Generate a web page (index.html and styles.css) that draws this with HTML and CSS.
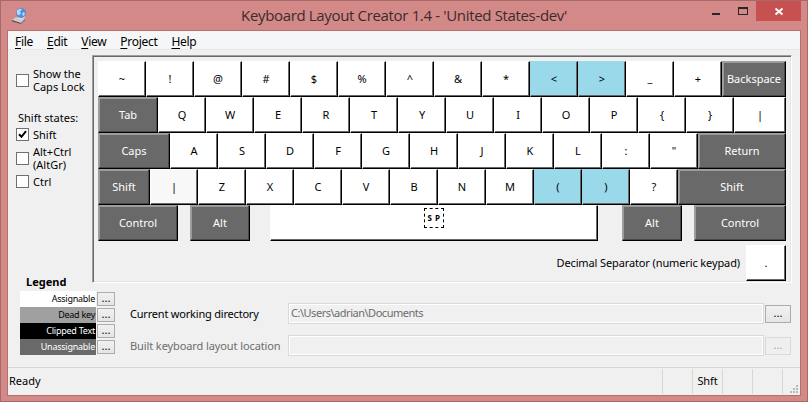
FILE: index.html
```html
<!DOCTYPE html>
<html lang="en">
<head>
<meta charset="utf-8">
<title>Keyboard Layout Creator 1.4</title>
<link rel="stylesheet" href="styles.css">
</head>
<body>
<div class="window">
  <header class="titlebar">
    <svg class="app-icon" viewBox="0 0 18 18" width="18" height="18">
      <path d="M2 13l4-3 9 2-4 4z" fill="#c9cdd2"/>
      <path d="M2 13l9 3v1L2 14.500z" fill="#55565c"/>
      <path d="M11 16l4-4v1.500l-4 3.500z" fill="#77659f"/>
      <circle cx="11" cy="6" r="5" fill="#4d8fdb"/>
      <path d="M7 3.500q3-3 5-1l-2 2 1 2-2 2q-3-1-2-5zM13 5l2 1-1 3-2-1z" fill="#b6d9f3"/>
      <path d="M8 11q4 2 7-1" fill="none" stroke="#dde6ee"/>
    </svg>
    <h1 class="title">Keyboard Layout Creator 1.4 - 'United States-dev'</h1>
    <svg class="win-buttons" viewBox="0 0 100 20" width="100" height="20">
      <path d="M10 12h8v2h-8z" fill="#2b2526"/>
      <path d="M36 6h10v8H36zM37 8v5h8V8z" fill="#2b2526" fill-rule="evenodd"/>
      <path d="M54 0h45v20H54z" fill="#c75050"/>
      <path d="M73.500 7.500l7 6M80.500 7.500l-7 6" stroke="#fff" stroke-width="1.900" fill="none"/>
    </svg>
  </header>

  <div class="client">
    <nav class="menu">
      <span><u>F</u>ile</span><span><u>E</u>dit</span><span><u>V</u>iew</span><span><u>P</u>roject</span><span><u>H</u>elp</span>
    </nav>

    <main class="main">
      <aside class="side">
        <label class="check caps"><i class="box"></i><span>Show the<br>Caps Lock</span></label>
        <div class="states">Shift states:</div>
        <label class="check"><i class="box"><svg viewBox="0 0 11 11" width="11" height="11"><path d="M2 5.200l2.500 2.600L9 2.200" fill="none" stroke="#000" stroke-width="2"/></svg></i><span>Shift</span></label>
        <label class="check two"><i class="box"></i><span>Alt+Ctrl<br>(AltGr)</span></label>
        <label class="check"><i class="box"></i><span>Ctrl</span></label>
        <div class="legend-title">Legend</div>
      </aside>

      <section class="board">
        <div class="row"><b>~</b><b>!</b><b>@</b><b>#</b><b>$</b><b>%</b><b>^</b><b>&amp;</b><b>*</b><b class="blue">&lt;</b><b class="blue">&gt;</b><b class="low">_</b><b>+</b><b class="dark fill">Backspace</b></div>
        <div class="row"><b class="dark w60">Tab</b><b>Q</b><b>W</b><b>E</b><b>R</b><b>T</b><b>Y</b><b>U</b><b>I</b><b>O</b><b>P</b><b>{</b><b>}</b><b class="fill">|</b></div>
        <div class="row"><b class="dark w72">Caps</b><b>A</b><b>S</b><b>D</b><b>F</b><b>G</b><b>H</b><b>J</b><b>K</b><b>L</b><b>:</b><b>"</b><b class="dark fill">Return</b></div>
        <div class="row"><b class="dark w52">Shift</b><b class="pale">|</b><b>Z</b><b>X</b><b>C</b><b>V</b><b>B</b><b>N</b><b>M</b><b class="blue">(</b><b class="blue">)</b><b>?</b><b class="dark fill">Shift</b></div>
        <div class="row bottom"><b class="dark w80">Control</b><b class="dark w60 alt">Alt</b><b class="space"><span class="sp">S P</span></b><b class="dark w60">Alt</b><b class="dark w92">Control</b></div>
        <div class="decimal"><span class="dec-label">Decimal Separator (numeric keypad)</span><b class="w40">.</b></div>
      </section>
    </main>

    <section class="lower">
      <div class="legend">
        <div class="item"><span class="sw assign">Assignable</span><button>...</button></div>
        <div class="item"><span class="sw deadkey">Dead key</span><button>...</button></div>
        <div class="item"><span class="sw clipped">Clipped Text</span><button>...</button></div>
        <div class="item"><span class="sw unassign">Unassignable</span><button>...</button></div>
      </div>
      <div class="paths">
        <div class="path"><span class="path-label l-cwd">Current working directory</span><span class="field">C:\Users\adrian\Documents</span><button>...</button></div>
        <div class="path off"><span class="path-label l-built">Built keyboard layout location</span><span class="field"></span><button>...</button></div>
      </div>
    </section>

    <footer class="status">
      <span class="ready">Ready</span><span class="cell"></span><span class="cell">Shft</span><span class="cell"></span><span class="cell"></span><span class="cell grip"><svg viewBox="0 0 8 8" width="8" height="8"><path d="M6 0h2v2H6zM3 3h2v2H3zM6 3h2v2H6zM0 6h2v2H0zM3 6h2v2H3zM6 6h2v2H6z" fill="#b8b8b8"/></svg></span>
    </footer>
  </div>
</div>
</body>
</html>
```
FILE: styles.css
```css
* { box-sizing: border-box; }
body {
  margin: 0;
  background: #fff;
  font: 11px/13px "Noto Sans", sans-serif;
  color: #000;
  overflow: hidden;
}
.window {
  width: 808px;
  height: 402px;
  background: #d38987;
  border: 1px solid #a56967;
  padding: 0 6px 6px;
}
.titlebar {
  height: 29px;
  display: grid;
  grid-template-columns: 100px 1fr 100px;
}
.app-icon { margin: 6px 0 0 3px; }
.title {
  margin: 0;
  padding: 3px 0 0;
  font: 15px/23px "Open Sans", sans-serif;
  letter-spacing: -0.34px;
  color: #3d2b2c;
  text-align: center;
  white-space: nowrap;
}
.win-buttons { margin-left: 1px; }
.client {
  height: 366px;
  border: 1px solid #b56f6e;
  background: #f0f0f0;
  display: flex;
  flex-direction: column;
}
.menu {
  height: 19px;
  flex: none;
  background: #f5f6f7;
  border-bottom: 1px solid #e8e8e9;
  padding: 2px 0 0 7px;
  display: flex;
  gap: 14px;
  font-size: 12px;
  letter-spacing: -0.3px;
  line-height: 17px;
}
.menu u { text-underline-offset: 2px; }
.main {
  display: flex;
  height: 241px;
  flex: none;
}
.side { width: 84px; padding: 16px 0 0 8px; flex: none; }
.check { display: flex; align-items: center; gap: 4px; white-space: nowrap; }
.check span { margin-top: -1px; }
.check.caps { height: 28px; }
.check.two { margin: 5px 0 4px; }
.box {
  width: 13px;
  height: 13px;
  flex: none;
  border: 1px solid #707070;
  background: #fff;
  display: block;
}
.box svg { display: block; }
.states { margin: 17px 0 4px 2px; white-space: nowrap; }
.legend-title { font: bold 11px/13px "Noto Sans", sans-serif; margin: 87px 0 0 10px; }
.board {
  width: 700px;
  height: 228px;
  margin-top: 5px;
  border: 1px solid;
  border-color: #a0a0a0 #fff #fff #a0a0a0;
  box-shadow: inset 1px 1px #696969, inset -1px -1px #e3e3e3;
  padding: 5px;
}
.row { display: flex; height: 36px; }
.row b, .decimal b {
  width: 48px;
  height: 36px;
  font-weight: normal;
  display: flex;
  align-items: center;
  justify-content: center;
  background: #fff;
  border: 1px solid;
  border-color: #fff #000 #000 #fff;
  box-shadow: inset -1px -1px #696969;
  padding-bottom: 1px;
  flex: none;
}
.row .blue { background: #99d9ea; border-left-color: #99d9ea; border-top-color: #99d9ea; }
.row .pale { background: #f8f8f8; }
.row .low { padding-bottom: 4px; }
.row .dark {
  background: #696969;
  color: #fff;
  border-color: #a0a0a0 #000 #000 #a0a0a0;
  box-shadow: inset -1px -1px #484848, inset 1px 1px #9a9a9a;
}
.row .fill { flex: 1; }
.row .w52 { width: 52px; }
.row .w60 { width: 60px; }
.row .w72 { width: 72px; }
.row .w80 { width: 80px; }
.row .w92 { width: 92px; margin-left: 12px; }
.row .alt { margin: 0 20px 0 12px; }
.row .space { width: 328px; margin-right: 24px; align-items: flex-start; padding-top: 2px; }
.sp {
  width: 20px;
  height: 20px;
  border: 1px dashed #000;
  font: bold 8px/17px "Noto Sans", sans-serif;
  letter-spacing: 0.5px;
  text-align: center;
  white-space: nowrap;
}
.decimal { display: flex; justify-content: flex-end; align-items: center; gap: 6px; margin-top: 4px; }
.decimal .w40 { width: 40px; }
.dec-label { letter-spacing: -0.12px; margin-top: -2px; }
.lower { display: flex; height: 76px; flex: none; }
button {
  font: 11px/9px "Noto Sans", sans-serif;
  padding: 0 0 2px;
  border: 1px solid #acacac;
  background: linear-gradient(#f1f1f1, #e5e5e5);
  color: #000;
}
.legend { width: 95px; margin-left: 12px; flex: none; }
.item { display: flex; height: 16px; gap: 1px; align-items: center; }
.item button { width: 18px; height: 14px; padding-bottom: 3px; line-height: 8px; }
.sw {
  width: 76px;
  height: 16px;
  padding-right: 1px;
  font-size: 9px;
  letter-spacing: -0.25px;
  line-height: 15px;
  text-align: right;
}
.assign { background: #fff; }
.deadkey { background: #a0a0a0; }
.clipped { background: #000; color: #fff; }
.unassign { background: #696969; color: #fff; }
.paths { margin: 12px 0 0 15px; display: flex; flex-direction: column; gap: 11px; }
.path { display: flex; align-items: center; height: 21px; }
.path-label { width: 158px; white-space: nowrap; }
.l-cwd { letter-spacing: -0.2px; }
.l-built { letter-spacing: -0.1px; }
.field {
  width: 476px;
  height: 21px;
  border: 1px solid #d9d9d9;
  box-shadow: inset 0 0 0 1px #fff;
  padding-left: 2px;
  line-height: 18px;
  letter-spacing: -0.48px;
  color: #6d6d6d;
}
.path button { width: 26px; height: 18px; margin-left: 1px; }
.off { color: #6d6d6d; }
.off button { border-color: #d9d9d9; background: #efefef; color: #a0a0a0; }
.status {
  flex: 1;
  border-top: 1px solid #d7d7d7;
  padding-top: 1px;
  display: flex;
}
.ready { width: 654px; padding-left: 1px; line-height: 24px; }
.cell { width: 30px; height: 25px; border-left: 1px solid #d7d7d7; line-height: 24px; text-align: center; letter-spacing: -0.1px; }
.grip { width: 18px; display: flex; justify-content: flex-end; align-items: flex-end; padding: 0 2px 1px 0; }
```
